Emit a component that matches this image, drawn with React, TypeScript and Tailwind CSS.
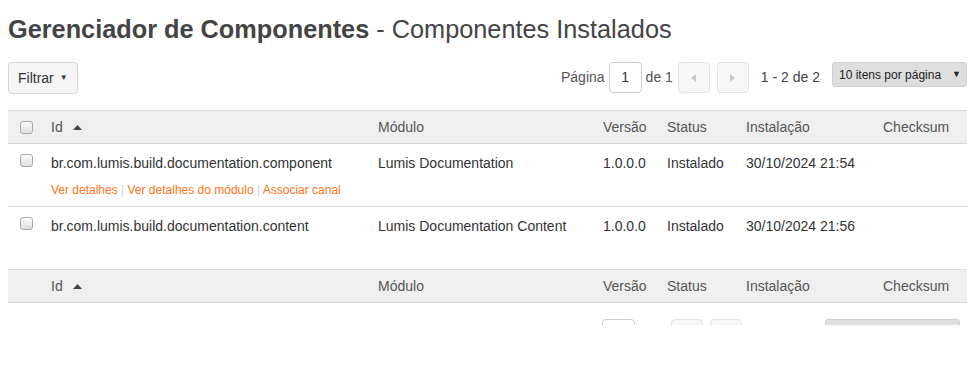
import { ReactNode } from 'react'

const cols = 'grid grid-cols-[35px_327px_225px_64px_79px_137px_1fr]'

type Row = {
  id: string
  modulo: string
  versao: string
  status: string
  instalacao: string
  links?: boolean
}

const rows: Row[] = [
  {
    id: 'br.com.lumis.build.documentation.component',
    modulo: 'Lumis Documentation',
    versao: '1.0.0.0',
    status: 'Instalado',
    instalacao: '30/10/2024 21:54',
    links: true,
  },
  {
    id: 'br.com.lumis.build.documentation.content',
    modulo: 'Lumis Documentation Content',
    versao: '1.0.0.0',
    status: 'Instalado',
    instalacao: '30/10/2024 21:56',
  },
]

function Checkbox() {
  return (
    <span className="block w-[13px] h-[13px] rounded-[3px] border border-[#a9a9a9] bg-gradient-to-b from-[#fcfcfc] to-[#dedede]"></span>
  )
}

function SortUp() {
  return (
    <svg width="9" height="5" viewBox="0 0 9 5" className="ml-[10px] mt-[1px]">
      <path d="M0 5 L4.5 0 L9 5 Z" fill="#444" />
    </svg>
  )
}

// header row; the footer copy shares its top border with the last body row
function HeaderRow({ footer }: { footer?: boolean }) {
  return (
    <div
      className={`${cols} items-center bg-[#efefef] border-b border-[#d6d6d6] text-[#555] ${
        footer ? 'h-[33px]' : 'h-[34px] border-t'
      }`}
    >
      <div className="flex justify-center pl-[1px]">{!footer && <Checkbox />}</div>
      <div className="flex items-center pl-2">
        Id
        <SortUp />
      </div>
      <div className="pl-2">Módulo</div>
      <div className="pl-2">Versão</div>
      <div className="pl-2">Status</div>
      <div className="pl-2">Instalação</div>
      <div className="pl-2">Checksum</div>
    </div>
  )
}

function NavButton({ children }: { children: ReactNode }) {
  return (
    <span className="flex items-center justify-center w-[32px] h-[31px] rounded-[4px] border border-[#e3e3e3] bg-[#f7f7f7]">
      {children}
    </span>
  )
}

function Pager() {
  return (
    <div className="flex items-center text-[#555]">
      <span>Página</span>
      <span className="ml-[4px] flex items-center justify-center w-[33px] h-[31px] rounded-[4px] border border-[#ccc] bg-white text-[#333]">1</span>
      <span className="ml-[4px]">de 1</span>
      <span className="ml-[5px]">
        <NavButton>
          <svg width="5" height="8" viewBox="0 0 5 8">
            <path d="M5 0 L0 4 L5 8 Z" fill="#c8c8c8" />
          </svg>
        </NavButton>
      </span>
      <span className="ml-[7px]">
        <NavButton>
          <svg width="5" height="8" viewBox="0 0 5 8">
            <path d="M0 0 L5 4 L0 8 Z" fill="#c8c8c8" />
          </svg>
        </NavButton>
      </span>
      <span className="ml-[12px] text-[#444]">1 - 2 de 2</span>
      <span className="ml-[12px] self-start flex items-center justify-between w-[135px] h-[25px] rounded-[3px] border border-[#cfcfcf] bg-[#dedede] pl-[6px] pr-[5px] text-[12px] text-[#222]">
        <span>10 itens por página</span>
        <span className="text-[9px]">▼</span>
      </span>
    </div>
  )
}

export default function App() {
  return (
    <div className="h-[373px] bg-white font-['Liberation_Sans',Arial,sans-serif] text-[14px]">
      <div className="h-[325px] overflow-hidden px-2">
        <h1 className="pt-[11px] text-[25.3px] leading-[37px] text-[#444]">
          <span className="font-bold">Gerenciador de Componentes</span> - Componentes Instalados
        </h1>

        <div className="mt-[14px] flex items-start justify-between">
          <button className="flex items-center h-[32px] px-[9px] rounded-[4px] border border-[#d5d5d5] bg-[#f5f5f5] text-[#333]">
            Filtrar
            <span className="ml-[6px] text-[8px]">▼</span>
          </button>
          <Pager />
        </div>

        <div className="mt-[16px]">
          <HeaderRow />
          {rows.map((row) => (
            <div key={row.id} className={`${cols} h-[63px] border-b border-[#dcdcdc] text-[#333]`}>
              <div className="flex justify-center pt-[10px] pl-[1px]">
                <Checkbox />
              </div>
              <div className="pl-2 pt-[9px]">
                <div className="leading-[20px]">{row.id}</div>
                {row.links && (
                  <div className="mt-[10px] text-[12px] leading-[14px] text-[#ff7320]">
                    Ver detalhes <span className="text-[#d0d0d0]">|</span> Ver detalhes do módulo{' '}
                    <span className="text-[#d0d0d0]">|</span> Associar canal
                  </div>
                )}
              </div>
              <div className="pl-2 pt-[9px] leading-[20px]">{row.modulo}</div>
              <div className="pl-2 pt-[9px] leading-[20px]">{row.versao}</div>
              <div className="pl-2 pt-[9px] leading-[20px]">{row.status}</div>
              <div className="pl-2 pt-[9px] leading-[20px]">{row.instalacao}</div>
              <div className="pl-2 pt-[9px] leading-[20px]"></div>
            </div>
          ))}
          <HeaderRow footer />
        </div>

        <div className="mt-[16px] flex justify-end pr-[7px]">
          <Pager />
        </div>
      </div>
    </div>
  )
}
